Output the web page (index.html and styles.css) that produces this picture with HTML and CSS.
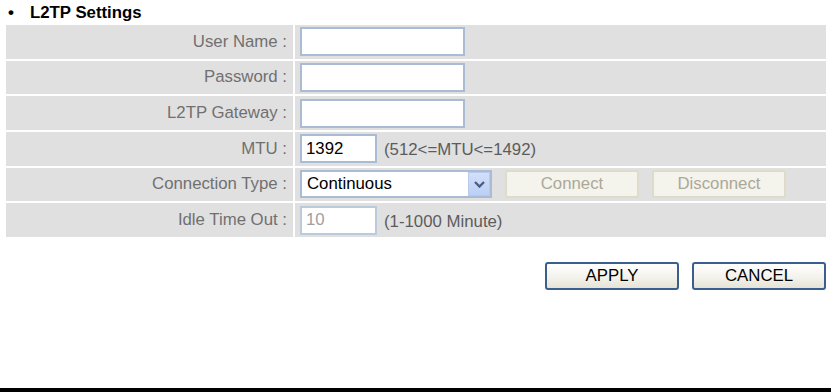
FILE: index.html
```html
<!DOCTYPE html>
<html>
<head>
	<meta charset="utf-8">
	<title>L2TP Settings</title>
	<link rel="stylesheet" href="styles.css">
</head>
<body>
	<div class="page">
		<h3 class="title"><span class="dot">&bull;</span>L2TP Settings</h3>

		<div class="settings">
			<div class="lbl">User Name :</div>
			<div class="val"><input class="txt wide" type="text" value=""></div>

			<div class="lbl">Password :</div>
			<div class="val"><input class="txt wide" type="password" value=""></div>

			<div class="lbl">L2TP Gateway :</div>
			<div class="val"><input class="txt wide" type="text" value=""></div>

			<div class="lbl">MTU :</div>
			<div class="val"><input class="txt short" type="text" value="1392"><span class="hint">(512&lt;=MTU&lt;=1492)</span></div>

			<div class="lbl">Connection Type :</div>
			<div class="val">
				<span class="select">
					<span class="sel-text">Continuous</span>
					<span class="sel-arrow">
						<svg width="11" height="7" viewBox="0 0 11 7"><path d="M1 1 L5.5 5.5 L10 1" fill="none" stroke="#4a5f86" stroke-width="2.4"/></svg>
					</span>
				</span>
				<button class="btn off" disabled>Connect</button>
				<button class="btn off" disabled>Disconnect</button>
			</div>

			<div class="lbl">Idle Time Out :</div>
			<div class="val"><input class="txt short" type="text" value="10" disabled><span class="hint">(1-1000 Minute)</span></div>
		</div>

		<div class="actions">
			<button class="btn main">APPLY</button>
			<button class="btn main">CANCEL</button>
		</div>
	</div>
	<div class="bottom"></div>
</body>
</html>
```

FILE: styles.css
```css
html, body {
	height: 100%;
}

body {
	margin: 0;
	padding: 0;
	background: #fff;
	font-family: "Liberation Sans", Arial, sans-serif;
	font-size: 16.8px;
	display: flex;
	flex-direction: column;
}

.page {
	flex: 1;
	padding: 0 5px 0 6px;
}

.title {
	margin: 0;
	height: 25px;
	line-height: 23px;
	font-size: 16.8px;
	font-weight: bold;
	color: #000;
	display: flex;
	align-items: center;
}

.dot {
	width: 22px;
	padding-left: 2px;
	font-size: 17px;
}

.settings {
	display: grid;
	grid-template-columns: 287px 1fr;
	grid-auto-rows: 33.67px;
	gap: 2px;
}

.lbl, .val {
	background: #e0e0e0;
	display: flex;
	align-items: center;
}

.lbl {
	justify-content: flex-end;
	padding-right: 6px;
	color: #707070;
}

.val {
	padding-left: 5px;
	color: #5a5a5a;
}

.txt {
	box-sizing: border-box;
	height: 29px;
	margin: 0;
	padding: 0 4px;
	border: 2px solid #a9bcd4;
	background: #fff;
	font-family: inherit;
	font-size: 16.8px;
	color: #000;
	outline: none;
}

.txt.wide {
	width: 165px;
}

.txt.short {
	width: 77px;
}

.txt:disabled {
	color: #a0a0a0;
	border-color: #bccbdc;
}

.hint {
	margin-left: 7px;
	padding-top: 3px;
	color: #5c5c5c;
}

.select {
	box-sizing: border-box;
	width: 192px;
	height: 28px;
	border: 2px solid #a9bcd4;
	background: #fff;
	display: inline-flex;
	align-items: center;
	color: #000;
}

.sel-text {
	flex: 1;
	padding-left: 5px;
}

.sel-arrow {
	width: 22px;
	height: 24px;
	box-sizing: border-box;
	border: 1px solid #b7c9ec;
	background: linear-gradient(#d3dffa, #bccff5);
	display: flex;
	align-items: center;
	justify-content: center;
}

.btn {
	box-sizing: border-box;
	width: 134px;
	height: 28px;
	margin: 0;
	padding: 0;
	border-radius: 3px;
	font-family: inherit;
	font-size: 16.8px;
}

.btn.off {
	margin-left: 13px;
	background: #f4f3ec;
	border: 2px solid #dedbca;
	color: #aca899;
}

.actions {
	display: flex;
	justify-content: flex-end;
	gap: 13px;
	margin-top: 25px;
}

.btn.main {
	border: 2px solid #3a5f8e;
	background: linear-gradient(#ffffff, #f2f1ea 60%, #e6e3d6);
	color: #000;
}

.bottom {
	height: 4px;
	background: #000;
}
```
